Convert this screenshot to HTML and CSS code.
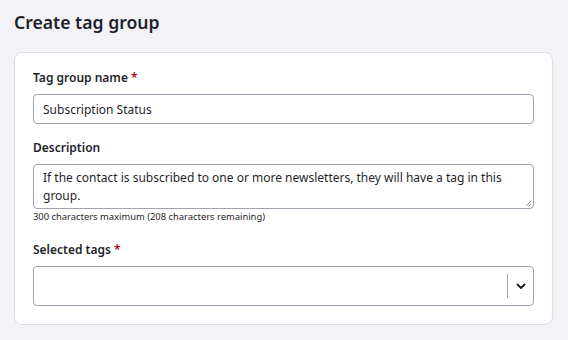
FILE: index.html
```html
<!DOCTYPE html>
<html>
<head>
<meta charset="utf-8">
<link rel="stylesheet" href="styles.css">
</head>
<body>
<div class="page">
  <h1 class="title">Create tag group</h1>
  <div class="card">
    <div class="field">
      <label class="label">Tag group name <span class="req">*</span></label>
      <div class="input">Subscription Status</div>
    </div>
    <div class="field">
      <label class="label">Description</label>
      <div class="textarea">If the contact is subscribed to one or more newsletters, they will have a tag in this group.
        <svg class="grip" width="8" height="8" viewBox="0 0 8 8"><path d="M7 2L2 7M7 5L5 7" stroke="#888" stroke-width="0.9" fill="none"/></svg>
      </div>
      <div class="help">300 characters maximum (208 characters remaining)</div>
    </div>
    <div class="field">
      <label class="label">Selected tags <span class="req">*</span></label>
      <div class="select">
        <div class="select-value"></div>
        <div class="sep"></div>
        <div class="chev">
          <svg width="10" height="7" viewBox="0 0 10 7"><path d="M1.5 1.5L5 5L8.5 1.5" stroke="#1f1f2b" stroke-width="1.8" fill="none" stroke-linecap="round" stroke-linejoin="round"/></svg>
        </div>
      </div>
    </div>
  </div>
</div>
</body>
</html>
```
FILE: styles.css
```css
html, body {
  margin: 0;
  padding: 0;
  background: #f2f2f7;
}
body {
  font-family: "Noto Sans", "Open Sans", sans-serif;
  color: #1f1f2b;
}
.page {
  padding: 8px 15px 0 14px;
}
.title {
  margin: 0;
  font-size: 17.6px;
  font-weight: 600;
  line-height: 28px;
  height: 44px;
}
.card {
  background: #fff;
  border: 1px solid #dcdce2;
  border-radius: 8px;
  padding: 16px 18px 18px 18px;
}
.field {
  display: flex;
  flex-direction: column;
}
.label {
  font-size: 12px;
  font-weight: 600;
  line-height: 18px;
  margin-bottom: 7px;
}
.req {
  color: #b3001b;
}
.input {
  box-sizing: content-box;
  border: 1px solid #a2a2b0;
  border-radius: 4px;
  font-size: 12px;
  line-height: 26px;
  padding: 2px 9px 0 9px;
  height: 26px;
  margin-bottom: 15px;
}
.textarea {
  position: relative;
  border: 1px solid #a2a2b0;
  border-radius: 4px;
  font-size: 12px;
  line-height: 18px;
  padding: 4px 9px;
  box-sizing: border-box;
  height: 45px;
}
.grip {
  position: absolute;
  right: 1px;
  bottom: 1px;
}
.help {
  font-size: 9.4px;
  line-height: 12px;
  margin-top: 2px;
  margin-bottom: 18px;
}
.select {
  height: 38px;
  border: 1px solid #a2a2b0;
  border-radius: 4px;
  display: flex;
  align-items: center;
}
.select-value {
  flex: 1;
}
.sep {
  width: 1px;
  height: 24px;
  background: #a2a2b0;
}
.chev {
  width: 25px;
  display: flex;
  justify-content: center;
  align-items: center;
}
```
